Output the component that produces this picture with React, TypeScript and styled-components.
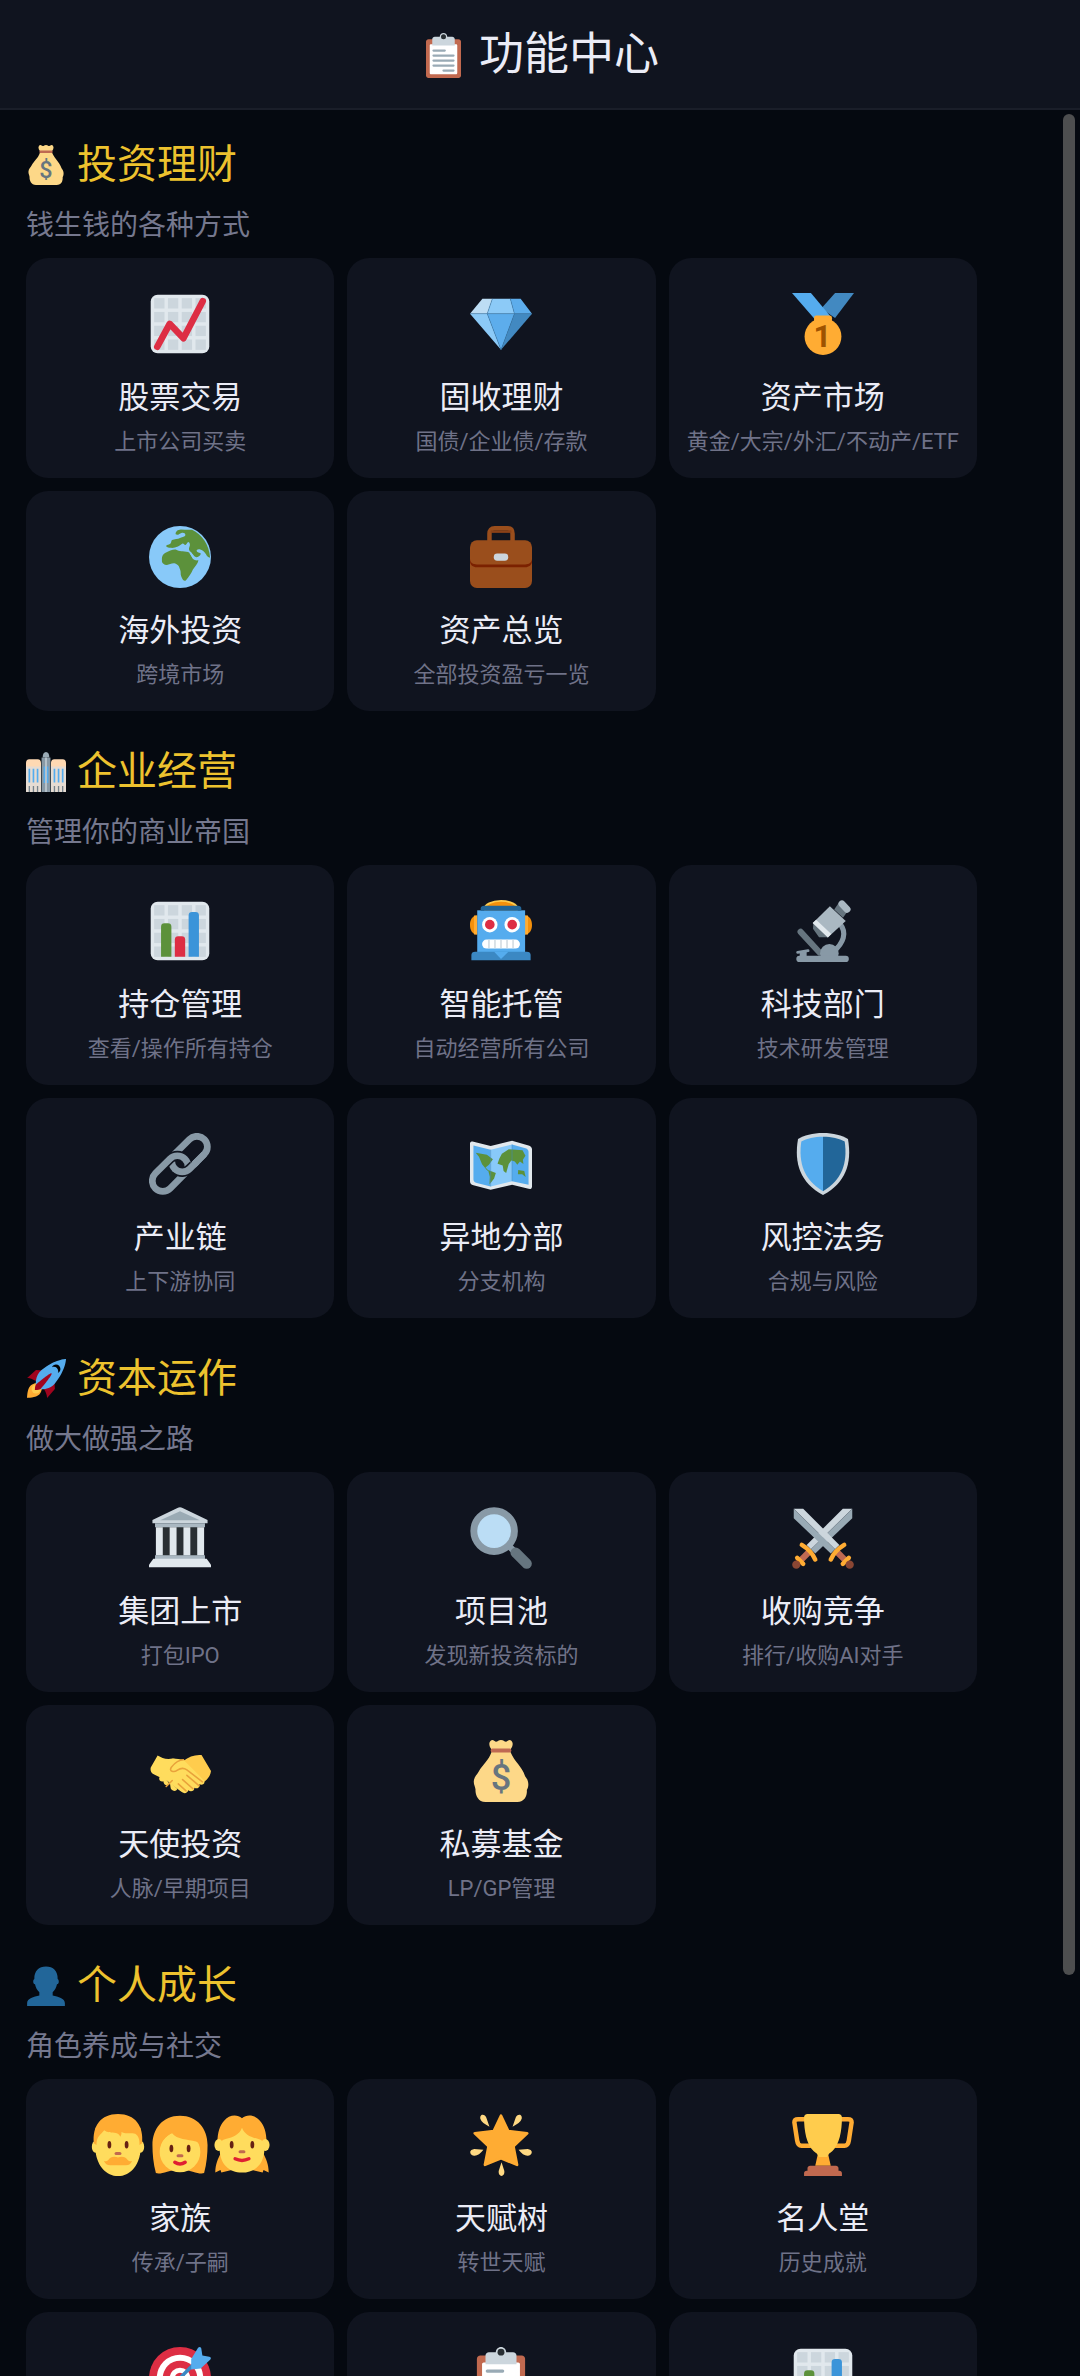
import React from "react";
import styled, { createGlobalStyle } from "styled-components";

const GlobalStyle = createGlobalStyle`
  * { box-sizing: border-box; }
  body {
    margin: 0;
    background: #050910;
    font-family: Roboto, "Noto Sans CJK SC", sans-serif;
  }
`;

/* ---------- icons (36 unit grid) ---------- */

const ChartPaper = () => (
  <>
    <rect x="1" y="1" width="34" height="34" rx="4" fill="#E1E8ED" />
    {[3, 11, 19, 27].map((y) =>
      [3, 11, 19, 27].map((x) => (
        <rect key={`${x}-${y}`} x={x} y={y} width="6" height="6" fill="#CCD6DD" />
      ))
    )}
  </>
);

const swordParts = (
  <>
    <path fill="#CCD6DD" d="M1 1h5.500L27.500 22 25 24.500z" />
    <path fill="#99AAB5" d="M1 1v5.500L22.500 27 25 24.500z" />
    <path stroke="#BF6952" strokeWidth="3.600" d="M26 26l6 6" />
    <path stroke="#FFAC33" strokeWidth="2.600" strokeLinecap="round" d="M22.500 30.500C24 27 27 24 30.300 22M29.500 33l3.500-3.500" />
    <circle cx="33.500" cy="33.500" r="2.400" fill="#8A4633" />
  </>
);

const drawings = {
  clipboard: (
    <>
      <path fill="#C1694F" d="M32 34c0 1.104-.896 2-2 2H6c-1.104 0-2-.896-2-2V7c0-1.104.896-2 2-2h24c1.104 0 2 .896 2 2v27z" />
      <path fill="#FFF" d="M29 32c0 .553-.447 1-1 1H8c-.552 0-1-.447-1-1V10c0-.552.448-1 1-1h20c.553 0 1 .448 1 1v22z" />
      <path fill="#CCD6DD" d="M25 3h-4c0-1.657-1.343-3-3-3s-3 1.343-3 3h-4c-1.104 0-2 .896-2 2v5h18V5c0-1.104-.896-2-2-2z" />
      <circle cx="18" cy="3" r="2" fill="#292F33" />
      <path stroke="#99AAB5" strokeWidth="1.800" strokeLinecap="round" d="M10 14h9M10 18h16M10 22h16M10 26h16M18 30h8" />
    </>
  ),
  moneyBag: (
    <>
      <path fill="#FDD888" d="M12.500 7C10.800 12 7.500 14 5 18.500c-1 1.800-2.600 2.800-2.800 5.500-.1 2 .9 3.200 1 4.800C3 31.500 4.500 36 9 36h18.500c4.500 0 5.800-4 5.500-7 1.300-2.200 1.300-5.300-1-8C30 15 26 13 23.500 7z" />
      <path fill="#FDD888" d="M12.500 5.500C11 3.500 10.800 1.500 12 .4c1.300-1 2.200.4 3 .6 1.200 0 1.500-1 3-1s1.800 1 3 1c.8-.2 1.700-1.600 3-.6 1.200 1.100 1 3.100-.5 5.100z" />
      <rect x="12" y="5" width="12" height="2.200" rx="1" fill="#BF6952" />
      <text x="18" y="29.300" textAnchor="middle" fontFamily="Roboto, sans-serif" fontWeight="500" fontSize="21" fill="#67757F">$</text>
    </>
  ),
  city: (
    <>
      <path fill="#99AAB5" d="M15 5c0-3 1-5 3-5s3 2 3 5z" />
      <path fill="#8899A6" d="M14 5h8v31h-8z" />
      <path fill="#FFD9B3" d="M0 10c0-2 1-3.500 3-3.500h7.500c2 0 3 1.500 3 3.500v4H0zM22.500 10c0-2 1-3.500 3-3.500H33c2 0 3 1.500 3 3.500v4H22.500z" />
      <path fill="#E6DCD3" d="M0 13h13.500v23H0zM22.500 13H36v23H22.500z" />
      <path stroke="#55ACEE" strokeWidth="1.500" d="M3 15v12.500M6.700 15v12.500M10.400 15v12.500M25.600 15v12.500M29.300 15v12.500M33 15v12.500M16.600 13v15M19.400 13v15" />
      <path stroke="#77838C" strokeWidth="1.200" d="M3 30.500V36M6.700 30.500V36M10.400 30.500V36M25.600 30.500V36M29.300 30.500V36M33 30.500V36" />
      <path stroke="#CCD6DD" strokeWidth="1.200" d="M18 5v31" />
    </>
  ),
  rocket: (
    <>
      <path fill="#A0041E" d="M1 17l8-7 16 1 1 16-7 8s.001-5.999-6-12-12-6-12-6z" />
      <path fill="#FFAC33" d="M.973 35s-.036-7.979 2.985-11S15 21.187 15 21.187 14.999 29 11.999 32c-3 3-11.026 3-11.026 3z" />
      <circle fill="#FFCC4D" cx="8.999" cy="27" r="4" />
      <path fill="#55ACEE" d="M35.999 0s-10 0-22 10c-6 5-6 14-4 16s11 2 16-4c10-12 10-22 10-22z" />
      <path fill="#000" d="M26.999 5c-1.623 0-3.013.971-3.641 2.360.502-.227 1.055-.360 1.641-.360 2.209 0 4 1.791 4 4 0 .586-.133 1.139-.359 1.640 1.389-.627 2.359-2.017 2.359-3.640 0-2.209-1.791-4-4-4z" />
      <path fill="#A0041E" d="M8 28s0-4 1-5 13.001-10.999 14-10-9.001 13-10.001 14S8 28 8 28z" />
    </>
  ),
  person: (
    <path fill="#226699" d="M24 26.500v-2.900c2-1.700 3.300-4.200 3.900-7.100 1 0 1.600-1 1.600-2.500 0-1-.3-2-1-2.300C28.700 4.500 24.500.500 18 .500S7.300 4.500 7.500 11.700c-.7.3-1 1.300-1 2.300 0 1.500.6 2.500 1.600 2.500.6 2.900 1.900 5.400 3.900 7.100v2.900C7 27.500 1 29 1 33.500V36h34v-2.500c0-4.500-6-6-11-7z" />
  ),
  trend: (
    <>
      <ChartPaper />
      <path fill="none" stroke="#DD2E44" strokeWidth="3.800" strokeLinecap="round" strokeLinejoin="round" d="M4.800 31.200L12 17.900l8 8.400L31.200 4.800" />
    </>
  ),
  bars: (
    <>
      <ChartPaper />
      <path fill="#5C913B" d="M7 33V15.500a2 2 0 0 1 2-2h2a2 2 0 0 1 2 2V33z" />
      <path fill="#DD2E44" d="M15 33V23a2 2 0 0 1 2-2h2a2 2 0 0 1 2 2v10z" />
      <path fill="#3B94D9" d="M23 33V9a2 2 0 0 1 2-2h2a2 2 0 0 1 2 2v24z" />
    </>
  ),
  gem: (
    <>
      <path fill="#BDDDF4" d="M7.200 3.300H13L10 12H0z" />
      <path fill="#8CCAF7" d="M13 3.300h10.400L25.800 12H10zM0 12h10l8 21z" />
      <path fill="#5DADEC" d="M23.400 3.300h6L36 12H25.800zM10 12h15.800L18 33z" />
      <path fill="#4289C1" d="M25.800 12H36L18 33z" />
      <path fill="none" stroke="#3E7EB0" strokeWidth=".3" d="M0 12h36M13 3.300L10 12l8 21 7.800-21-2.400-8.700" />
    </>
  ),
  medal: (
    <>
      <path fill="#4289C1" d="M25 0h11L25 14.500 17 9z" />
      <path fill="#55ACEE" d="M0 0h11l12.500 15H13z" />
      <circle cx="18" cy="25.300" r="10.700" fill="#FFAC33" />
      <rect x="12.800" y="13" width="10.400" height="5" rx="1.400" fill="#FFAC33" />
      <text x="17.600" y="31.600" textAnchor="middle" fontFamily="Roboto, sans-serif" fontWeight="700" fontSize="18" fill="#9E5200">1</text>
    </>
  ),
  globe: (
    <>
      <circle cx="18" cy="18" r="18" fill="#88C9F9" />
      <path fill="#5C913B" d="M7.500 18.400c.3-1.600 1.200-2.600 3-3.300 2-1 3-1.500 5-1.400 1.500.8 2.500 1 4 .9 1.500.2 3 .2 4 .9l2 3.500c.8.9 2 1.100 3.200.9-.3 2-2 3.700-3.200 5.300-.8 2-2.500 4.500-4 6.300-.8.600-1.600.2-1.900-.4-.6-1.200-1.400-2.600-1.200-4 .1-1.500-.7-2.400-1-3.600-.7-.9-1.500-1.500-2.600-1.800-1.700-.2-3 .9-4.400.9-1.700-.1-2.800-1-2.900-2.200z" />
      <path fill="#5C913B" d="M15.500 4.800c-.3-1.600 1.200-2.700 3-2.800 2 .2 4.500.3 6.500.2 5.700 2.800 10 8.600 10.500 16.200-1.200-.2-2-1-2.400-2-1-1.300-2-2.600-3.700-2.900-1.300-.2-2.200.5-1.500 1.500.6.7 1.700.3 2.200 1.100-.4 1.200-1.600 2-2.700 2-1.500-.5-2.200-2.500-3.800-3.600-.8-1-.2-2 .1-3 .2-1-.1-2-.8-2.200-.9.200-.9 1.400-1.700 1.700-.8.100-.9-.9-1.700-.8-1 .4-1.500 1.400-2.700 1.700-1.500.6-2.600 1-4.300.8-1.100 0-2.600-.3-2.500-1.200.4-.9 1.800-.6 2.500-1.400.8-.8.100-1.300.9-1.900 1.400-.9 3.400-.4 4.600-1.300.8-.6 2.500-.4 3-1.300.6-1.400-1-2-2.200-1.600-1.100.4-2 1.600-3.300.8z" />
      <path fill="none" stroke="#88C9F9" strokeWidth="1" strokeLinecap="round" d="M24 15.500l1.800 3" />
    </>
  ),
  briefcase: (
    <>
      <path fill="none" stroke="#9A4E1C" strokeWidth="2.600" d="M11.300 10V4.500c0-2 1-3.200 3-3.200h7.400c2 0 3 1.200 3 3.200V10" />
      <path fill="#8A4118" d="M12 2.500h12V4H12z" />
      <rect y="8.300" width="36" height="27.700" rx="4" fill="#9A4E1C" />
      <path fill="#7B2100" d="M0 19c0 2.200 1.800 3.300 4 3.300h28c2.200 0 4-1.100 4-3.300v1.500c0 2.200-1.800 3.500-4 3.500H4c-2.200 0-4-1.300-4-3.500z" />
      <rect x="13.800" y="16" width="8.400" height="4.200" rx="2" fill="#CCD6DD" />
    </>
  ),
  robot: (
    <>
      <ellipse cx="18" cy="5" rx="10" ry="5" fill="#FFCC4D" />
      <ellipse cx="18" cy="5.600" rx="9" ry="4.600" fill="#F4900C" />
      <path fill="#F4900C" d="M4 9C1.500 9 0 11.500 0 14.500S1.500 20 4 20zM32 9c2.500 0 4 2.500 4 5.500S34.500 20 32 20z" />
      <path fill="#FFAC33" d="M2.300 9h2v11h-2zM31.700 9h2v11h-2z" />
      <rect x="4.200" y="6" width="27.800" height="26" fill="#55ACEE" />
      <path fill="#226699" d="M6.200 6.300V5c0-1.200.8-1.700 2-1.700h19.600c1.200 0 2 .5 2 1.700v1.300z" />
      <circle cx="11.500" cy="14.300" r="4.500" fill="#FFF" />
      <circle cx="24.500" cy="14.300" r="4.500" fill="#FFF" />
      <circle cx="11.500" cy="14.300" r="2.800" fill="#DD2E44" />
      <circle cx="24.500" cy="14.300" r="2.800" fill="#DD2E44" />
      <rect x="7" y="23" width="22" height="5.200" rx="2.600" fill="#FFF" />
      <path stroke="#CCD6DD" strokeWidth=".8" d="M11 23v5M14.500 23v5M18 23v5M21.500 23v5M25 23v5" />
      <path fill="#3B88C3" d="M.8 32c0-1.400.8-2 2.200-2h30c1.400 0 2.200.6 2.200 2v3H.8z" />
      <path fill="#55ACEE" d="M14 30h8.300L18 34.200z" />
    </>
  ),
  microscope: (
    <>
      <path stroke="#66757F" strokeWidth="3.600" strokeLinecap="round" d="M5 18.500l11 12" />
      <path fill="none" stroke="#8899A6" strokeWidth="3" d="M28 14c4 5 2 11-4 16" />
      <circle cx="21.700" cy="31" r="5.400" fill="#8899A6" />
      <rect x="2.500" y="32.300" width="30.500" height="3.700" rx="1.800" fill="#8899A6" />
      <path stroke="#8899A6" strokeWidth="1.700" strokeLinecap="round" d="M3.300 30.400l6-1" />
      <rect x="4.500" y="30" width="4" height="4" fill="#8899A6" />
      <path fill="#66757F" d="M24.500 5.500l2.600-3.700 5 5-2.500 3.500zM12.400 13.500l-.2 3.200 3.500 5h5z" />
      <path fill="#AAB8C2" d="M22 3.600l9.200 8.600-10.400 9.600-8.700-8.400z" />
      <path fill="#E1E8ED" d="M12 13.400l2-2 8.800 8.400-2 2z" />
      <path stroke="#AAB8C2" strokeWidth="4" strokeLinecap="round" d="M29 2.200l3 3.200" />
    </>
  ),
  link: (
    <g transform="translate(17.900 17.900) rotate(-45)" fill="none">
      <rect x="-4.100" y="-6.100" width="24.200" height="12.200" rx="6.100" stroke="#8899A6" strokeWidth="3.900" />
      <rect x="-20.100" y="-6.100" width="24.200" height="12.200" rx="6.100" stroke="#10141F" strokeWidth="5.800" />
      <path stroke="#8899A6" strokeWidth="3.900" d="M6 6.100h8" />
      <rect x="-20.100" y="-6.100" width="24.200" height="12.200" rx="6.100" stroke="#8899A6" strokeWidth="3.900" />
      <path stroke="#10141F" strokeWidth="5.800" d="M-4.100 .5A6.100 6.100 0 0 0 2 6.100H5" />
      <path stroke="#8899A6" strokeWidth="3.900" d="M-4.100 -.5V0A6.100 6.100 0 0 0 2 6.100H8" />
    </g>
  ),
  map: (
    <>
      <path fill="#E1E8ED" d="M1.500 5L12 7.600 24.400 4.500 34 7.200c1.200.4 2 1 2 2.300V31c0 1.200-.8 1.700-2 1.400L24.400 30 12 33 2 30.400C.8 30 0 29.400 0 28V6.300C0 5.300.5 4.700 1.500 5z" />
      <path fill="#55ACEE" d="M2 7.200l10 2.500V31L4 29c-1.200-.3-2-.8-2-2z" />
      <path fill="#88C9F9" d="M12 9.700l12.400-3V28L12 31z" />
      <path fill="#55ACEE" d="M24.400 6.700l7.800 2.200c1.200.4 1.800 1 1.800 2.200v19L24.400 28z" />
      <path fill="#5C913B" d="M3.300 11.500l6.500 1.200 3.500 2.600-2.300 3.200-2 1.500 2 2-1-.2-3-3.600-1.800-4.400zM10.500 21.500l4.500 1.700-1 3.200-2.700 3.500.2-4.500zM17 15l1.500-3 4-2.500 8 .5 1.700 3.200-1.500 2.300.3 2.500-2-1.500-1.500 2-1.500-2-2-.5-1.500 2-1.500 5.200-1.500-1.200-.5-3.200-3-1zM28 21.500l3.500.5.8 3.500-2-1.500-2.500 0z" />
      <path stroke="#4289C1" strokeWidth=".3" d="M12 9.700V31M24.400 6.700V28" />
    </>
  ),
  shield: (
    <>
      <path fill="#CCD6DD" d="M18 0C12 0 6.800 1.400 3.500 3.500 1 18 5 29 18 36c13-7 17-18 14.500-32.500C29.200 1.400 24 0 18 0z" />
      <path fill="#55ACEE" d="M18 2.200c-5 0-9.500 1-12.600 2.800C3.600 17.500 7 27.500 18 33.800z" />
      <path fill="#226699" d="M18 2.200c5 0 9.500 1 12.600 2.800C32.400 17.500 29 27.500 18 33.800z" />
    </>
  ),
  bank: (
    <>
      <path fill="#292F33" d="M5 11h26v18H5z" />
      <path fill="#CCD6DD" d="M2 7.500L16.500.6c1-.6 2-.6 3 0L34 7.500v2H2z" />
      <path fill="#9AAAB4" d="M6.500 7.700L18 2.500l11.500 5.200z" />
      <path fill="#AAB8C2" d="M3.500 9.500h29v2.300h-29z" />
      <path fill="#E1E8ED" d="M4 11.800h4v16.400H4zM12 11.800h4v16.400h-4zM20 11.800h4v16.400h-4zM28 11.800h4v16.400h-4z" />
      <path fill="#AAB8C2" d="M3.500 28h29v2.500h-29z" />
      <path fill="#E1E8ED" d="M2.500 30h31l2.500 3.500V35H0v-1.500z" />
    </>
  ),
  magnifier: (
    <>
      <path stroke="#8899A6" strokeWidth="3.600" d="M22 22l5 5" />
      <path stroke="#66757F" strokeWidth="6" strokeLinecap="round" d="M26.500 26.500l6.400 6.400" />
      <circle cx="14" cy="14" r="11.800" fill="#BBDDF5" stroke="#8899A6" strokeWidth="4" />
    </>
  ),
  swords: (
    <>
      <g transform="matrix(-1 0 0 1 36 0)">{swordParts}</g>
      <g>{swordParts}</g>
    </>
  ),
  handshake: (
    <>
      <path fill="#FFCC4D" d="M13 11c3-.5 6 1.500 8 .5 3-2.300 6-2.800 9.500-2.800L36 18c-.3 3-2.500 5.500-5 7l-9 1z" />
      <path fill="#FFDC5D" d="M5 9c2.500 1.500 5 2.500 9 1.700 2 0 4 .5 6 .8l12 12c.8 1.800-1 3-2.800 2.200.6 1.800-1.200 3-2.900 2 .3 1.900-2 2.800-3.500 1.500-.4 1.700-2.300 2.200-3.800 1l-2-1.500-6.500-5L3 20c-2-1-2.300-2.500-2-4z" />
      <path fill="#FFDC5D" d="M7 19l5 6.500c-2 2-4-.5-3.500-1.500-2 .8-3.500-1.500-2-3zM12 24l4.500 4.500c-1 2-4 1-4-1z" />
      <path fill="none" stroke="#E9A23B" strokeWidth=".9" strokeLinecap="round" d="M20 11.500c-3 0-5 1.800-7 4.300-1.700 2.500 1.500 3.200 3.500 1.700 2-1.400 3.500-1.500 5.500-.2l9 7M22 20.500l7 6M19.500 23l6 5.300M17 25.500l4.500 4M13.500 23.500L10 27" />
    </>
  ),
  man: (
    <>
      <ellipse cx="4.900" cy="19" rx="2.100" ry="3.500" fill="#FFDC5D" />
      <ellipse cx="31.100" cy="19" rx="2.100" ry="3.500" fill="#FFDC5D" />
      <path fill="#FFDC5D" d="M5 8h26v14c-1 8-6 14-13 14S6 30 5 22z" />
      <path fill="#FFAC33" d="M4 17C3 7 8 0 18 0s15 7 14 17l-1.500 1c.1-3-.4-5-2.500-6.500-3-.8-6 .3-8-1 .2 1-.2 2-.7 2.700-.5-1.200-1.300-2-2.500-2.200-2.500-.2-5 0-6.800-1.500C8 12 5.500 13 5.500 18z" />
      <ellipse cx="13" cy="17.900" rx="1.100" ry="2.200" fill="#662113" />
      <ellipse cx="23" cy="17.900" rx="1.100" ry="2.200" fill="#662113" />
      <rect x="16" y="22" width="4" height="1.800" rx=".9" fill="#C1694F" />
      <path fill="#FFAC33" d="M18 25.300c2-1 4.500-.5 5.500 1.200.8.8 1.700 1 2.600.8-.5 1.800-2 2.700-4 2.500H14c-2 .2-3.500-.7-4.100-2.500.9.200 1.800 0 2.600-.8 1-1.700 3.500-2.200 5.500-1.200z" />
    </>
  ),
  woman: (
    <>
      <path fill="#FFAC33" d="M18 1C8 1 2 8.500 2 18c0 5 .5 11 2 16.300 3 1.200 7-2 14-2s11 3.200 14 2C33.500 29 34 23 34 18 34 8.500 28 1 18 1z" />
      <circle cx="18" cy="22" r="11.800" fill="#FFDC5D" />
      <path fill="#FFAC33" d="M6 21c.3-5 3.500-8 7.300-10 3 4 9 3.500 14 5 1.700.7 2.400 2 2.700 4L32 15 25 7H11l-6 7z" />
      <ellipse cx="13" cy="20" rx="1.100" ry="2.200" fill="#662113" />
      <ellipse cx="23" cy="20" rx="1.100" ry="2.200" fill="#662113" />
      <rect x="16" y="23.300" width="4" height="1.800" rx=".9" fill="#C1694F" />
      <path fill="none" stroke="#DF1F32" strokeWidth="2" strokeLinecap="round" d="M15 28c2 1.400 4 1.400 6 0" />
    </>
  ),
  girl: (
    <>
      <path fill="#FFAC33" d="M6 22c-2 4-3.500 7-3.500 12l3-1.500.5 1.500 6-1.500V22zM30 22c2 4 3.500 7 3.500 12l-3-1.500-.5 1.500-6-1.500V22z" />
      <path fill="#FFAC33" d="M18 2.500C15 0 10.500.5 7.500 4 5 7 3.500 11 3.800 18h28.400C32.500 11 31 7 28.500 4 25.500.5 21 0 18 2.500z" />
      <ellipse cx="4.500" cy="18" rx="2.500" ry="3.500" fill="#FFDC5D" />
      <ellipse cx="31.500" cy="18" rx="2.500" ry="3.500" fill="#FFDC5D" />
      <path fill="#FFDC5D" d="M5 20c0-3 1-5 3.500-5.500C13 13.500 16.500 12 18 8c1.500 4 5 5.500 9.500 6.500C30 15 31 17 31 20c0 9-5.500 14-13 14S5 29 5 20z" />
      <ellipse cx="12" cy="17.900" rx="1.100" ry="2.200" fill="#662113" />
      <ellipse cx="24" cy="17.900" rx="1.100" ry="2.200" fill="#662113" />
      <rect x="16" y="21" width="4" height="1.800" rx=".9" fill="#C1694F" />
      <path fill="none" stroke="#DF1F32" strokeWidth="2" strokeLinecap="round" d="M14 26c2.500 1.200 5.500 1.200 8 0" />
    </>
  ),
  star: (
    <>
      <path fill="#FFAC33" stroke="#FFAC33" strokeWidth="1.600" strokeLinejoin="round" d="M18 1l4.200 8.900 11 1.300-8 7.500L27.300 29.500 18 25.700l-9.300 3.800L10.800 18.700l-8-7.500 11-1.300z" />
      <g fill="#FFD983">
        <path d="M6.500.7c1.200-.6 2.500.2 3 1.500l1.800 5.200C8.500 6 6.500 4.500 6 2.800c-.2-.9 0-1.700.5-2.100zM29.500.7c-1.200-.6-2.500.2-3 1.500l-1.800 5.200c2.800-1.400 4.800-2.900 5.300-4.600.2-.9 0-1.700-.5-2.100z" />
        <path d="M.2 22.500c-.4-1 .8-2 2.300-2.200l5.300.4c-1.800 2.200-3.500 3.600-5.300 3.500C1.200 24.100.300 23.500.2 22.500zM35.800 22.500c.4-1-.8-2-2.300-2.200l-5.300.4c1.800 2.200 3.500 3.600 5.300 3.500 1.300-.1 2.200-.7 2.300-1.700zM18.300 28l1.600 5c.3 1.600-.4 3-1.600 3s-1.900-1.400-1.600-3z" />
      </g>
    </>
  ),
  trophy: (
    <>
      <path fill="none" stroke="#FFAC33" strokeWidth="2.600" d="M9 3H3.500C2 3 1.300 3.600 1.400 5L3 15.500C3.300 17.500 4 18.400 5.500 18.400H11M27 3h5.500c1.500 0 2.200.6 2.100 2L33 15.500c-.3 2-1 2.900-2.500 2.900H25" />
      <path fill="#FFAC33" d="M15.500 21h5l2 9h-9z" />
      <path fill="#FFCC4D" d="M7 2c0-1.300.8-2 2-2h18c1.200 0 2 .7 2 2 0 8-1.500 15.500-5.500 19.500-2 1.500-2.500 2-3 3.500h-5c-.5-1.500-1-2-3-3.500C8.500 17.500 7 10 7 2z" />
      <path fill="#C1694F" d="M9 31.500c0-1 .7-1.500 1.500-1.500h15c.8 0 1.500.5 1.500 1.500V33h.5c.9 0 1.500.6 1.500 1.500V36H7v-1.500c0-.9.6-1.500 1.500-1.500H9z" />
    </>
  ),
  target: (
    <>
      <circle cx="18" cy="18" r="18" fill="#DD2E44" />
      <circle cx="18" cy="18" r="13.500" fill="#FFF" />
      <circle cx="18" cy="18" r="10" fill="#DD2E44" />
      <circle cx="18" cy="18" r="6" fill="#FFF" />
      <circle cx="18" cy="18" r="3" fill="#DD2E44" />
      <path stroke="#3B88C3" strokeWidth="2" d="M18 18L29 7" />
      <path fill="#55ACEE" d="M24.500 7l4-6.500c.8-.9 1.800-.5 1.900.6L31 5l4 .6c1 .2 1.200 1 .5 1.800L30 12.500l-5.500.5z" />
    </>
  ),
};

type IconName = keyof typeof drawings;

const Glyph = styled.svg<{ $size: number }>`
  display: block;
  flex: none;
  width: ${(p) => p.$size}px;
  height: ${(p) => p.$size}px;
`;

const Icon = ({ name, size }: { name: IconName; size: number }) => (
  <Glyph $size={size} viewBox="0 0 36 36" fill="none" aria-hidden="true">
    {drawings[name]}
  </Glyph>
);

/* ---------- layout ---------- */

const Shell = styled.div`
  position: relative;
  display: flex;
  flex-direction: column;
  height: 100vh;
  overflow: hidden;
  background: #050910;
  color: #ebecf6;
`;

const Header = styled.header`
  display: flex;
  flex: none;
  align-items: center;
  justify-content: center;
  gap: 13px;
  height: 110px;
  padding-top: 2px;
  background: #10141f;
  border-bottom: 2px solid #1a1e29;
`;

const PageTitle = styled.h1`
  margin: 0;
  font-size: 45px;
  font-weight: 400;
  line-height: 60px;
`;

const Body = styled.div`
  position: relative;
  flex: 1;
  min-height: 0;
`;

const Content = styled.main`
  display: flex;
  flex-direction: column;
  gap: 32px;
  height: 100%;
  padding: 26px 103px 26px 26px;
  overflow-y: auto;
  scrollbar-width: none;
`;

const ScrollTrack = styled.div`
  position: absolute;
  top: 4px;
  right: 5px;
  bottom: 4px;
  width: 12px;
`;

const ScrollThumb = styled.div`
  height: 82.4%;
  border-radius: 6px;
  background: #4d4e4f;
`;

const SectionBox = styled.section`
  display: flex;
  flex: none;
  flex-direction: column;
  gap: 14px;
`;

const SectionHeading = styled.div`
  display: flex;
  align-items: center;
  gap: 11px;
`;

const SectionTitle = styled.h2`
  margin: 0;
  color: #edc22e;
  font-size: 40px;
  font-weight: 400;
  line-height: 58px;
`;

const SectionNote = styled.p`
  margin: 0;
  color: #75788e;
  font-size: 28px;
  line-height: 36px;
`;

const Grid = styled.div`
  display: grid;
  grid-template-columns: repeat(3, minmax(0, 1fr));
  gap: 13px;
`;

const Card = styled.button`
  display: flex;
  flex-direction: column;
  align-items: center;
  min-height: 220px;
  padding: 35px 0 21px;
  border: 0;
  border-radius: 22px;
  background: #10141f;
  color: inherit;
  font-family: inherit;
  cursor: pointer;
`;

const IconRow = styled.span`
  display: flex;
  margin-bottom: 23px;
`;

const CardTitle = styled.span`
  margin-bottom: 9px;
  font-size: 31px;
  line-height: 40px;
`;

const CardNote = styled.span`
  color: #6f7288;
  font-size: 22px;
  line-height: 30px;
  white-space: nowrap;
`;

/* ---------- data ---------- */

type Item = { icons: IconName[]; title?: string; note?: string; label?: string };
type Group = { icon: IconName; title: string; note: string; items: Item[] };

const groups: Group[] = [
  {
    icon: "moneyBag",
    title: "投资理财",
    note: "钱生钱的各种方式",
    items: [
      { icons: ["trend"], title: "股票交易", note: "上市公司买卖" },
      { icons: ["gem"], title: "固收理财", note: "国债/企业债/存款" },
      { icons: ["medal"], title: "资产市场", note: "黄金/大宗/外汇/不动产/ETF" },
      { icons: ["globe"], title: "海外投资", note: "跨境市场" },
      { icons: ["briefcase"], title: "资产总览", note: "全部投资盈亏一览" },
    ],
  },
  {
    icon: "city",
    title: "企业经营",
    note: "管理你的商业帝国",
    items: [
      { icons: ["bars"], title: "持仓管理", note: "查看/操作所有持仓" },
      { icons: ["robot"], title: "智能托管", note: "自动经营所有公司" },
      { icons: ["microscope"], title: "科技部门", note: "技术研发管理" },
      { icons: ["link"], title: "产业链", note: "上下游协同" },
      { icons: ["map"], title: "异地分部", note: "分支机构" },
      { icons: ["shield"], title: "风控法务", note: "合规与风险" },
    ],
  },
  {
    icon: "rocket",
    title: "资本运作",
    note: "做大做强之路",
    items: [
      { icons: ["bank"], title: "集团上市", note: "打包IPO" },
      { icons: ["magnifier"], title: "项目池", note: "发现新投资标的" },
      { icons: ["swords"], title: "收购竞争", note: "排行/收购AI对手" },
      { icons: ["handshake"], title: "天使投资", note: "人脉/早期项目" },
      { icons: ["moneyBag"], title: "私募基金", note: "LP/GP管理" },
    ],
  },
  {
    icon: "person",
    title: "个人成长",
    note: "角色养成与社交",
    items: [
      { icons: ["man", "woman", "girl"], title: "家族", note: "传承/子嗣" },
      { icons: ["star"], title: "天赋树", note: "转世天赋" },
      { icons: ["trophy"], title: "名人堂", note: "历史成就" },
      { icons: ["target"], label: "目标" },
      { icons: ["clipboard"], label: "任务" },
      { icons: ["bars"], label: "统计" },
    ],
  },
];

export default function App() {
  return (
    <>
      <GlobalStyle />
      <Shell>
        <Header>
          <Icon name="clipboard" size={45} />
          <PageTitle>功能中心</PageTitle>
        </Header>
        <Body>
          <Content>
            {groups.map((group) => (
              <SectionBox key={group.title}>
                <SectionHeading>
                  <Icon name={group.icon} size={40} />
                  <SectionTitle>{group.title}</SectionTitle>
                </SectionHeading>
                <SectionNote>{group.note}</SectionNote>
                <Grid>
                  {group.items.map((item) => (
                    <Card key={item.title ?? item.label} type="button" aria-label={item.label}>
                      <IconRow>
                        {item.icons.map((name) => (
                          <Icon key={name} name={name} size={62} />
                        ))}
                      </IconRow>
                      {item.title && <CardTitle>{item.title}</CardTitle>}
                      {item.note && <CardNote>{item.note}</CardNote>}
                    </Card>
                  ))}
                </Grid>
              </SectionBox>
            ))}
          </Content>
          <ScrollTrack aria-hidden="true">
            <ScrollThumb />
          </ScrollTrack>
        </Body>
      </Shell>
    </>
  );
}
